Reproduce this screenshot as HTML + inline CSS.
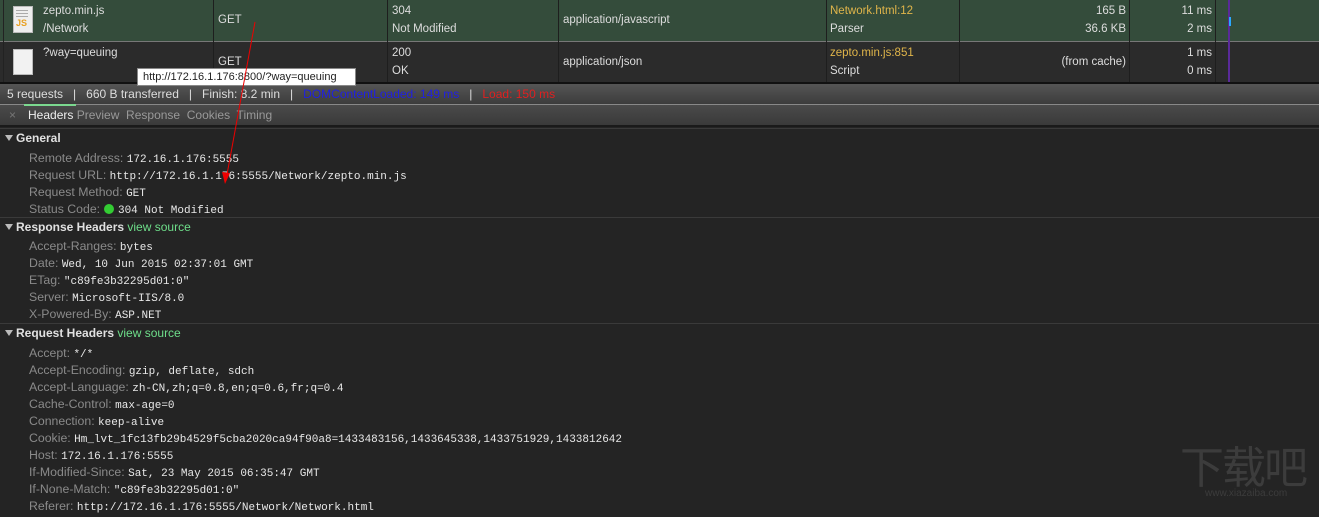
<!DOCTYPE html>
<html><head><meta charset="utf-8"><style>
*{margin:0;padding:0;box-sizing:border-box}
body{width:1319px;height:503px;overflow:hidden;background:#242424;font-family:"Liberation Sans",sans-serif;position:relative;color:#ddd}
.a{position:absolute;white-space:nowrap}
.s{font-size:11.5px;color:#ddd}
.row{position:absolute;left:0;width:1319px}
.vl{position:absolute;top:0;width:1px;background:#1e1e1e}
.lab{color:#8a8a8a;font-family:"Liberation Sans",sans-serif;font-size:12.3px}
.val{color:#e8e8e8;font-family:"Liberation Mono",monospace;font-size:11px}
.line{position:absolute;left:29px;white-space:nowrap;height:17px;line-height:17px}
.hd{position:absolute;left:0;width:1319px;height:19px;border-top:1px solid #3a3a3a;font-weight:bold;font-size:12px;color:#e0e0e0;line-height:19px;padding-left:16px}
.hd:before{content:"";position:absolute;left:5px;top:6px;border-left:4px solid transparent;border-right:4px solid transparent;border-top:6px solid #bbb}
.vs{color:#6ede8a;font-weight:normal}
</style></head><body>
<div class="row" style="top:0;height:41px;background:#344c3b"></div>
<div class="row" style="top:41px;height:1px;background:#777"></div>
<div class="row" style="top:42px;height:40px;background:#2b2b2b"></div>
<div class="row" style="top:82px;height:2px;background:#111"></div>
<div class="vl" style="left:3px;height:82px;background:#222"></div>
<div class="vl" style="left:213px;height:82px"></div>
<div class="vl" style="left:387px;height:82px"></div>
<div class="vl" style="left:558px;height:82px"></div>
<div class="vl" style="left:826px;height:82px"></div>
<div class="vl" style="left:959px;height:82px"></div>
<div class="vl" style="left:1129px;height:82px"></div>
<div class="vl" style="left:1215px;height:82px"></div>
<div class="a" style="left:1228px;top:0;width:2px;height:82px;background:#5a2a9a"></div>
<div class="a" style="left:1229px;top:17px;width:2px;height:9px;background:#2aa8ff"></div>
<div class="a" style="left:13px;top:6px;width:20px;height:27px;background:#eee;border:1px solid #bbb"></div>
<div class="a" style="left:16px;top:10px;width:12px;height:1px;background:#aaa;box-shadow:0 3px #aaa,0 6px #aaa"></div>
<div class="a" style="left:16px;top:18px;font-size:9px;font-weight:bold;color:#e8a020">JS</div>
<div class="a" style="left:13px;top:49px;width:20px;height:26px;background:#f2f2f2;border:1px solid #bbb"></div>
<div class="a s" style="left:43px;top:5px">zepto.min.js</div>
<div class="a s" style="left:43px;top:23px">/Network</div>
<div class="a s" style="left:218px;top:14px">GET</div>
<div class="a s" style="left:392px;top:5px">304</div>
<div class="a s" style="left:392px;top:23px">Not Modified</div>
<div class="a s" style="left:563px;top:14px">application/javascript</div>
<div class="a s" style="left:830px;top:5px;color:#e0b54a">Network.html:12</div>
<div class="a s" style="left:830px;top:23px">Parser</div>
<div class="a s" style="right:193px;top:5px">165 B</div>
<div class="a s" style="right:193px;top:23px">36.6 KB</div>
<div class="a s" style="right:107px;top:5px">11 ms</div>
<div class="a s" style="right:107px;top:23px">2 ms</div>
<div class="a s" style="left:43px;top:47px">?way=queuing</div>
<div class="a s" style="left:218px;top:56px">GET</div>
<div class="a s" style="left:392px;top:47px">200</div>
<div class="a s" style="left:392px;top:65px">OK</div>
<div class="a s" style="left:563px;top:56px">application/json</div>
<div class="a s" style="left:830px;top:47px;color:#e0b54a">zepto.min.js:851</div>
<div class="a s" style="left:830px;top:65px">Script</div>
<div class="a s" style="right:193px;top:56px">(from cache)</div>
<div class="a s" style="right:107px;top:47px">1 ms</div>
<div class="a s" style="right:107px;top:65px">0 ms</div>
<div class="row" style="top:84px;height:20px;background:linear-gradient(#555,#3c3c3c)"></div>
<div class="row" style="top:104px;height:1px;background:#888"></div>
<div class="row" style="top:105px;height:20px;background:linear-gradient(#4a4a4a,#3a3a3a)"></div>
<div class="row" style="top:125px;height:2px;background:#1a1a1a"></div>
<div class="a" style="left:7px;top:87px;font-size:12px;color:#ddd">5 requests&nbsp;&nbsp;&nbsp;|&nbsp;&nbsp;&nbsp;660 B transferred&nbsp;&nbsp;&nbsp;|&nbsp;&nbsp;&nbsp;Finish: 8.2 min&nbsp;&nbsp;&nbsp;|&nbsp;&nbsp;&nbsp;<span style="color:#2020e0">DOMContentLoaded: 149 ms</span>&nbsp;&nbsp;&nbsp;|&nbsp;&nbsp;&nbsp;<span style="color:#e02020">Load: 150 ms</span></div>
<div class="a" style="left:24px;top:104px;width:52px;height:2px;background:#7bd88f"></div>
<div class="a" style="left:9px;top:108px;font-size:12px;color:#777">×</div>
<div class="a" style="left:28px;top:108px;font-size:12px;color:#eee">Headers <span style="color:#999">Preview&nbsp; Response&nbsp; Cookies&nbsp; Timing</span></div>
<div class="a" style="left:137px;top:68px;width:219px;height:18px;background:#fff;border:1px solid #888;font-size:11px;color:#222;padding:2px 0 0 5px">http://172.16.1.176:8800/?way=queuing</div>
<div class="hd" style="top:128px">General</div>
<div class="line" style="top:149px"><span class="lab">Remote Address: </span><span class="val">172.16.1.176:5555</span></div>
<div class="line" style="top:166px"><span class="lab">Request URL: </span><span class="val">http://172.16.1.176:5555/Network/zepto.min.js</span></div>
<div class="line" style="top:183px"><span class="lab">Request Method: </span><span class="val">GET</span></div>
<div class="line" style="top:200px"><span class="lab">Status Code: </span><span style="display:inline-block;width:10px;height:10px;border-radius:50%;background:#3c3;vertical-align:-1px"></span> <span class="val">304 Not Modified</span></div>
<div class="hd" style="top:217px">Response Headers <span class="vs">view source</span></div>
<div class="line" style="top:237px"><span class="lab">Accept-Ranges: </span><span class="val">bytes</span></div>
<div class="line" style="top:254px"><span class="lab">Date: </span><span class="val">Wed, 10 Jun 2015 02:37:01 GMT</span></div>
<div class="line" style="top:271px"><span class="lab">ETag: </span><span class="val">"c89fe3b32295d01:0"</span></div>
<div class="line" style="top:288px"><span class="lab">Server: </span><span class="val">Microsoft-IIS/8.0</span></div>
<div class="line" style="top:305px"><span class="lab">X-Powered-By: </span><span class="val">ASP.NET</span></div>
<div class="hd" style="top:323px">Request Headers <span class="vs">view source</span></div>
<div class="line" style="top:344px"><span class="lab">Accept: </span><span class="val">*/*</span></div>
<div class="line" style="top:361px"><span class="lab">Accept-Encoding: </span><span class="val">gzip, deflate, sdch</span></div>
<div class="line" style="top:378px"><span class="lab">Accept-Language: </span><span class="val">zh-CN,zh;q=0.8,en;q=0.6,fr;q=0.4</span></div>
<div class="line" style="top:395px"><span class="lab">Cache-Control: </span><span class="val">max-age=0</span></div>
<div class="line" style="top:412px"><span class="lab">Connection: </span><span class="val">keep-alive</span></div>
<div class="line" style="top:429px"><span class="lab">Cookie: </span><span class="val">Hm_lvt_1fc13fb29b4529f5cba2020ca94f90a8=1433483156,1433645338,1433751929,1433812642</span></div>
<div class="line" style="top:446px"><span class="lab">Host: </span><span class="val">172.16.1.176:5555</span></div>
<div class="line" style="top:463px"><span class="lab">If-Modified-Since: </span><span class="val">Sat, 23 May 2015 06:35:47 GMT</span></div>
<div class="line" style="top:480px"><span class="lab">If-None-Match: </span><span class="val">"c89fe3b32295d01:0"</span></div>
<div class="line" style="top:497px"><span class="lab">Referer: </span><span class="val">http://172.16.1.176:5555/Network/Network.html</span></div>
<svg class="a" style="left:0;top:0" width="1319" height="503"><line x1="255" y1="22" x2="226" y2="180" stroke="#e00" stroke-width="1"/><polygon points="222,172 230,173 225,184" fill="#e00"/></svg>
<div class="a" style="left:1180px;top:440px;font-size:44px;color:#3c3c3c;font-family:'Noto Sans CJK SC',sans-serif;letter-spacing:-2px;line-height:48px">下载吧</div>
<div class="a" style="left:1205px;top:488px;font-size:10px;color:#3c3c3c">www.xiazaiba.com</div>
</body></html>
